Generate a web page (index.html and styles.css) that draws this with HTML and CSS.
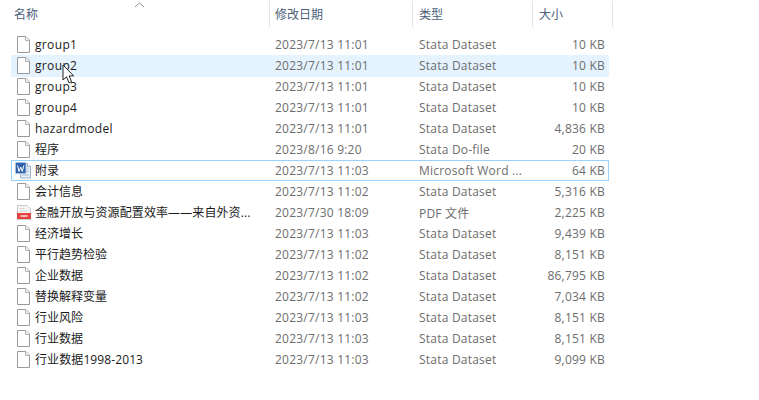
FILE: index.html
```html
<!DOCTYPE html>
<html>

<head>
    <meta charset="UTF-8">
    <title>文件列表</title>
    <link rel="stylesheet" href="styles.css">
</head>

<body>
    <svg class="sprites" width="0" height="0">
        <symbol id="blank" viewBox="0 0 13 17">
            <path d="M.5.500h8.500l3.500 3.500v12.500H.5z" fill="#fff" stroke="#9a9a9a" />
            <path d="M8.500.500v4h4" fill="#eee" stroke="#b4b4b4" />
        </symbol>
    </svg>
    <header class="heads">
        <div class="head head-name">名称
            <svg class="sort" width="11" height="6" viewBox="0 0 11 6">
                <path d="M1 5l4.500-4 4.500 4" fill="none" stroke="#8a8f96" />
            </svg>
        </div>
        <div class="head head-date">修改日期</div>
        <div class="head">类型</div>
        <div class="head">大小</div>
    </header>
    <main class="list">
        <div class="row">
            <svg class="ico"><use href="#blank" /></svg><span class="name latin">group1</span><span class="date">2023/7/13 11:01</span><span class="type">Stata Dataset</span><span class="size">10 KB</span>
        </div>
        <div class="row hover">
            <svg class="ico"><use href="#blank" /></svg><span class="name latin">group2</span><span class="date">2023/7/13 11:01</span><span class="type">Stata Dataset</span><span class="size">10 KB</span>
            <svg class="cursor" width="13" height="20" viewBox="0 0 13 20">
                <path d="M1 1v15l3.500-3.200 2.500 6 2.600-1.100-2.500-5.800h4.600z" fill="#fff" stroke="#222" />
            </svg>
        </div>
        <div class="row">
            <svg class="ico"><use href="#blank" /></svg><span class="name latin">group3</span><span class="date">2023/7/13 11:01</span><span class="type">Stata Dataset</span><span class="size">10 KB</span>
        </div>
        <div class="row">
            <svg class="ico"><use href="#blank" /></svg><span class="name latin">group4</span><span class="date">2023/7/13 11:01</span><span class="type">Stata Dataset</span><span class="size">10 KB</span>
        </div>
        <div class="row">
            <svg class="ico"><use href="#blank" /></svg><span class="name latin">hazardmodel</span><span class="date">2023/7/13 11:01</span><span class="type">Stata Dataset</span><span class="size">4,836 KB</span>
        </div>
        <div class="row">
            <svg class="ico"><use href="#blank" /></svg><span class="name cjk">程序</span><span class="date">2023/8/16 9:20</span><span class="type">Stata Do-file</span><span class="size">20 KB</span>
        </div>
        <div class="row focus">
            <svg class="ico ico-word" viewBox="0 0 16 17">
                <path d="M5.500 1.500h7l3 3v11.500h-10z" fill="#e9eff8" stroke="#9fb2cc" />
                <path d="M12.500 1.500v3h3" fill="#fff" stroke="#9fb2cc" />
                <path d="M12 7h2M12 9.500h2M7 13h7" stroke="#a9bcd8" />
                <rect x=".5" y=".5" width="10.500" height="11" rx="1" fill="#2f62ad" stroke="#a8c0e0" />
                <path d="M2.500 3.500l1.500 6 1.700-4.500 1.600 4.500 1.500-6" fill="none" stroke="#fff" />
            </svg><span class="name cjk">附录</span><span class="date">2023/7/13 11:03</span><span class="type">Microsoft Word ...</span><span class="size">64 KB</span>
        </div>
        <div class="row">
            <svg class="ico"><use href="#blank" /></svg><span class="name cjk">会计信息</span><span class="date">2023/7/13 11:02</span><span class="type">Stata Dataset</span><span class="size">5,316 KB</span>
        </div>
        <div class="row">
            <svg class="ico ico-pdf" viewBox="0 0 14 15">
                <path d="M.5.500h9.500l3.500 3.500v10.500H.5z" fill="#f5f5f5" stroke="#c8c8c8" />
                <path d="M2.500 3.500h5M2.500 6h8" stroke="#d4d4d4" />
                <rect y="8" width="14" height="6" fill="#e8413a" />
                <path d="M3.500 10h7v2h-7z" fill="#f7b5b1" />
            </svg><span class="name cjk wide">金融开放与资源配置效率——来自外资...</span><span class="date">2023/7/30 18:09</span><span class="type">PDF 文件</span><span class="size">2,225 KB</span>
        </div>
        <div class="row">
            <svg class="ico"><use href="#blank" /></svg><span class="name cjk">经济增长</span><span class="date">2023/7/13 11:03</span><span class="type">Stata Dataset</span><span class="size">9,439 KB</span>
        </div>
        <div class="row">
            <svg class="ico"><use href="#blank" /></svg><span class="name cjk">平行趋势检验</span><span class="date">2023/7/13 11:02</span><span class="type">Stata Dataset</span><span class="size">8,151 KB</span>
        </div>
        <div class="row">
            <svg class="ico"><use href="#blank" /></svg><span class="name cjk">企业数据</span><span class="date">2023/7/13 11:02</span><span class="type">Stata Dataset</span><span class="size">86,795 KB</span>
        </div>
        <div class="row">
            <svg class="ico"><use href="#blank" /></svg><span class="name cjk">替换解释变量</span><span class="date">2023/7/13 11:02</span><span class="type">Stata Dataset</span><span class="size">7,034 KB</span>
        </div>
        <div class="row">
            <svg class="ico"><use href="#blank" /></svg><span class="name cjk">行业风险</span><span class="date">2023/7/13 11:03</span><span class="type">Stata Dataset</span><span class="size">8,151 KB</span>
        </div>
        <div class="row">
            <svg class="ico"><use href="#blank" /></svg><span class="name cjk">行业数据</span><span class="date">2023/7/13 11:03</span><span class="type">Stata Dataset</span><span class="size">8,151 KB</span>
        </div>
        <div class="row">
            <svg class="ico"><use href="#blank" /></svg><span class="name cjk wide">行业数据1998-2013</span><span class="date">2023/7/13 11:03</span><span class="type">Stata Dataset</span><span class="size">9,099 KB</span>
        </div>
    </main>
</body>

</html>
```

FILE: styles.css
```css
body {
    margin: 0;
    background-color: white;
    font-family: "Open Sans", "Noto Sans CJK SC", sans-serif;
    font-size: 12px;
    overflow: hidden;
}

.sprites {
    position: absolute;
}

.heads {
    display: grid;
    grid-template-columns: 270px 143px 120px 80px;
    height: 28px;
}

.head {
    position: relative;
    padding-left: 6px;
    color: #4c607a;
    border-right: 1px solid #e5e5e5;
    margin-top: 1px;
    height: 26px;
    line-height: 28px;
}

.head-name {
    padding-left: 14px;
}

.head-date {
    padding-left: 5px;
}

.sort {
    position: absolute;
    left: 134px;
    top: 1px;
}

.list {
    margin: 6px 0 0 11px;
    width: 598px;
}

.row {
    position: relative;
    display: grid;
    grid-template-columns: 24px 240px 144px 100px 90px;
    align-items: center;
    height: 21px;
    box-sizing: border-box;
    color: #6d6d6d;
}

.hover {
    height: 22px;
    padding-bottom: 1px;
    margin-bottom: -1px;
    background-color: #e5f3ff;
}

.focus {
    outline: 1px solid #99d1ff;
    outline-offset: -1px;
}

.ico {
    width: 13px;
    height: 17px;
    margin-left: 6px;
}

.ico-word {
    width: 16px;
    height: 17px;
    margin-left: 4px;
}

.ico-pdf {
    width: 14px;
    height: 15px;
    margin-left: 6px;
}

.name {
    color: #1a1a1a;
    white-space: nowrap;
}

.latin {
    letter-spacing: .35px;
}

.cjk {
    padding-bottom: 2px;
}

.wide {
    letter-spacing: .1px;
}

.date,
.type,
.size {
    letter-spacing: .22px;
    white-space: nowrap;
}

.size {
    text-align: right;
    padding-right: 4px;
}

.cursor {
    position: absolute;
    left: 51px;
    top: 9px;
}
```
